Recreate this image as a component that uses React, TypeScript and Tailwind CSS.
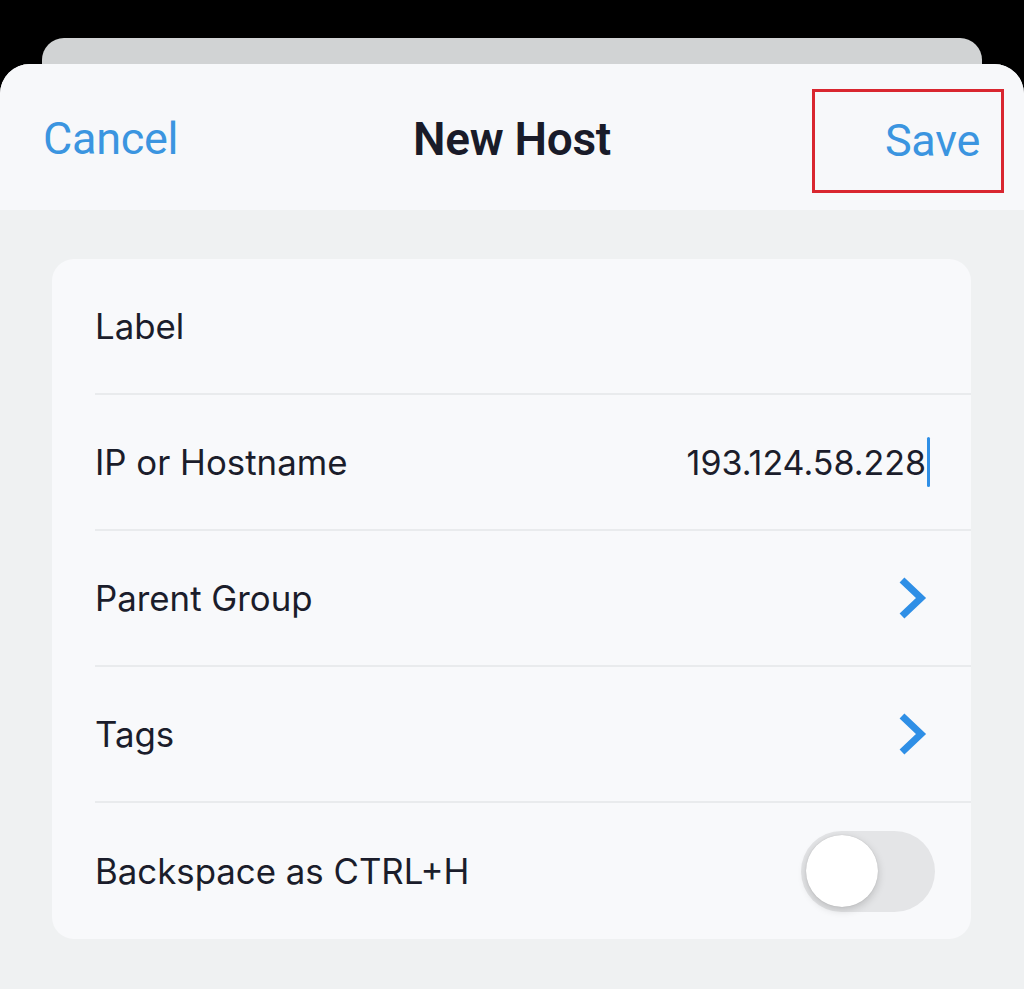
import { useState } from "react"

const rows = [
  { label: "Label", kind: "text" },
  { label: "IP or Hostname", kind: "value", value: "193.124.58.228" },
  { label: "Parent Group", kind: "link" },
  { label: "Tags", kind: "link" },
  { label: "Backspace as CTRL+H", kind: "toggle" },
]

function Chevron() {
  return (
    <svg width="30" height="44" viewBox="0 0 30 44" fill="none">
      <path d="M5 4 L24 22 L5 40" stroke="#2f8fe6" strokeWidth="7" strokeLinecap="butt" strokeLinejoin="miter" />
    </svg>
  )
}

export default function App() {
  const [on, setOn] = useState(false)

  return (
    <div className="w-[1024px] h-[989px] bg-black flex flex-col overflow-hidden" style={{ fontFamily: "Inter, 'Noto Sans', sans-serif" }}>
      <div className="h-[38px] shrink-0" />
      <div className="mx-[42px] h-[40px] -mb-[14px] shrink-0 rounded-t-[22px] bg-[#d1d3d4]" />
      <div className="flex-1 flex flex-col rounded-t-[30px] overflow-hidden bg-[#eff1f2]">
        <div className="h-[146px] shrink-0 bg-[#f7f8fa] relative flex items-center pt-[4px]">
          <button className="absolute left-[43px] text-[45px] text-[#3b95e0] tracking-[-0.3px]" style={{ fontFamily: "Roboto, sans-serif" }}>
            Cancel
          </button>
          <div className="w-full text-center text-[46px] font-semibold text-[#191b29] tracking-[-0.3px]" style={{ fontFamily: "Roboto, sans-serif" }}>
            New Host
          </div>
          <div className="absolute left-[812px] top-[25px] w-[192px] h-[104px] border-[3px] border-[#d9262f] flex items-center justify-end pr-[21px]">
            <span className="text-[45px] text-[#3b95e0] tracking-[-0.3px]" style={{ fontFamily: "Roboto, sans-serif" }}>
              Save
            </span>
          </div>
        </div>

        <div className="mt-[49px] mx-[52px] w-[919px] rounded-[22px] bg-[#f8f9fb] overflow-hidden">
          {rows.map((row, i) => (
            <div key={row.label} className="pl-[43px]">
              <div className={`h-[136px] flex items-center ${i < rows.length - 1 ? "border-b-2 border-[#e9ebed]" : ""}`}>
                <span className="text-[34.8px] text-[#1b1d2b]">{row.label}</span>
                <div className="flex-1" />
                {row.kind === "value" && (
                  <div className="flex items-center pr-[41px]">
                    <span className="text-[34px] text-[#1b1d2b]">{row.value}</span>
                    <span className="w-[3px] h-[50px] bg-[#2f8fe6] rounded-full ml-[1px]" />
                  </div>
                )}
                {row.kind === "link" && (
                  <div className="pr-[44px] flex items-center">
                    <Chevron />
                  </div>
                )}
                {row.kind === "toggle" && (
                  <button
                    onClick={() => setOn(!on)}
                    className={`mr-[36px] w-[134px] h-[81px] rounded-full p-[5px] flex items-center ${on ? "bg-[#34c759] justify-end" : "bg-[#e4e5e7] justify-start"}`}
                  >
                    <span className="w-[72px] h-[72px] rounded-full bg-white shadow-[0_3px_8px_rgba(0,0,0,0.18),0_0_1px_rgba(0,0,0,0.2)]" />
                  </button>
                )}
              </div>
            </div>
          ))}
        </div>
      </div>
    </div>
  )
}
